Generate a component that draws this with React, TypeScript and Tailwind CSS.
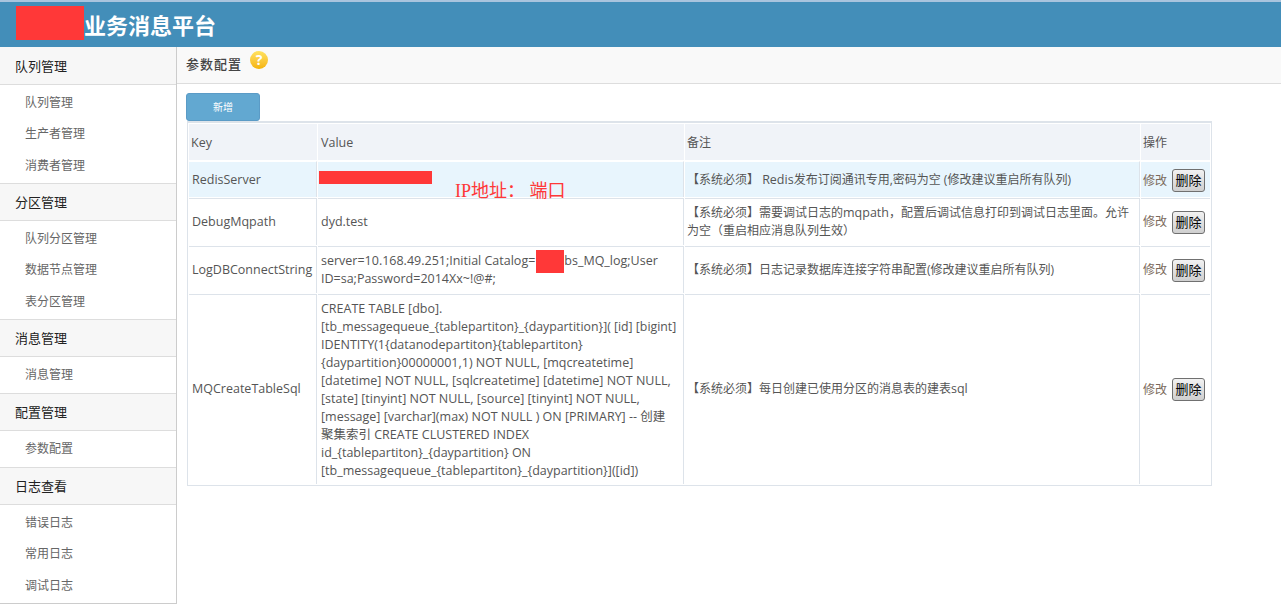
const ff = { fontFamily: '"Open Sans", "Noto Sans CJK SC", sans-serif' }

const menu = [
  { title: '队列管理', items: ['队列管理', '生产者管理', '消费者管理'] },
  { title: '分区管理', items: ['队列分区管理', '数据节点管理', '表分区管理'] },
  { title: '消息管理', items: ['消息管理'] },
  { title: '配置管理', items: ['参数配置'] },
  { title: '日志查看', items: ['错误日志', '常用日志', '调试日志'] },
]

const sqlLines = [
  'CREATE TABLE [dbo].',
  '[tb_messagequeue_{tablepartiton}_{daypartition}]( [id] [bigint]',
  'IDENTITY(1{datanodepartiton}{tablepartiton}',
  '{daypartition}00000001,1) NOT NULL, [mqcreatetime]',
  '[datetime] NOT NULL, [sqlcreatetime] [datetime] NOT NULL,',
  '[state] [tinyint] NOT NULL, [source] [tinyint] NOT NULL,',
  '[message] [varchar](max) NOT NULL ) ON [PRIMARY] -- 创建',
  '聚集索引 CREATE CLUSTERED INDEX',
  'id_{tablepartiton}_{daypartition} ON',
  '[tb_messagequeue_{tablepartiton}_{daypartition}]([id])',
]

function Redact({ className }: { className: string }) {
  return <span className={`inline-block bg-[#ff3838] ${className}`} />
}

function L({ children }: { children: string }) {
  return <span className="text-[12.5px]">{children}</span>
}

function Actions() {
  return (
    <div className="flex items-center gap-[5px]">
      <span className="text-[#7b6a5c]">修改</span>
      <button className="h-[23px] w-[33px] rounded-[3px] border border-[#707070] bg-gradient-to-b from-[#f2f2f2] to-[#cfcfcf] text-[13px] leading-none text-black">删除</button>
    </div>
  )
}

const cell = 'border-t border-r border-[#dde3ea] pl-[3px] pr-0 align-middle'
const first = 'border-t border-r border-[#dde3ea] border-t-white bg-[#e8f5fd] pt-[2px] pl-[3px] pr-0 align-middle'
const wide = 'border-t border-r border-[#dde3ea] pl-[2px] pr-0 align-middle'
const firstWide = 'border-t border-r border-[#dde3ea] border-t-white bg-[#e8f5fd] pt-[2px] pl-[2px] pr-0 align-middle'
const opCell = 'border-t border-[#dde3ea] pl-[2px] pr-0 align-middle'
const latin = 'text-[12.5px]'

export default function App() {
  return (
    <div style={ff} className="h-[607px] w-[1281px] overflow-hidden bg-white text-[12px] text-[#555]">
      <header className="flex h-[47px] items-start border-t-2 border-[#a9c4de] bg-[#438eb9] pl-[16px]">
        <Redact className="mt-[4px] h-[34px] w-[68px]" />
        <span className="mt-[7px] text-[22px] leading-[32px] font-bold text-white">业务消息平台</span>
      </header>
      <div className="flex">
        <aside className="w-[177px] shrink-0 border-r border-b border-[#ccc]">
          {menu.map((group, i) => (
            <div key={group.title}>
              <div className={`flex h-[38px] items-center border-b border-[#ddd] bg-[#f7f7f7] pt-[2px] pl-[15px] text-[13px] text-[#222] ${i > 0 ? 'border-t' : ''}`}>{group.title}</div>
              <div className="pt-[2px] pb-[1.5px]">
                {group.items.map(item => (
                  <div key={item} className={`flex items-center pl-[25px] text-[#666] ${group.items.length === 1 ? 'h-[32.5px]' : 'h-[31.5px]'}`}>{item}</div>
                ))}
              </div>
            </div>
          ))}
        </aside>
        <main className="min-w-0 flex-1">
          <div className="flex h-[37px] items-start border-b border-[#ddd] bg-[#f9f9f9] pl-[9px]">
            <span className="mt-[8px] text-[13px] font-medium tracking-[1px] text-[#444]">参数配置</span>
            <span className="mt-[4px] ml-[8px] flex h-[18px] w-[18px] items-center justify-center rounded-full bg-gradient-to-b from-[#ffe25e] to-[#f5b400] text-[14px] font-bold leading-none text-white">?</span>
          </div>
          <div className="pl-[9px] pt-[9px]">
            <button className="block h-[28px] w-[74px] rounded-[3px] border border-[#5b9bc6] bg-[#62a8d1] text-[10px] text-white">新增</button>
            <table className="ml-[1px] w-[1025px] table-fixed border-separate border-spacing-[1px] border border-t-2 border-[#dde3ea] bg-white">
              <colgroup>
                <col className="w-[128px]" />
                <col className="w-[366px]" />
                <col className="w-[455px]" />
                <col />
              </colgroup>
              <tbody>
                <tr className="h-[36px] bg-[#f0f3f8]">
                  <td className={`px-[2px] pt-[2px] ${latin}`}>Key</td>
                  <td className={`px-[3px] pt-[2px] ${latin}`}>Value</td>
                  <td className="px-[2px] pt-[2px]">备注</td>
                  <td className="px-[2px] pt-[2px]">操作</td>
                </tr>
                <tr className="h-[36px]">
                  <td className={`${first} ${latin}`}>RedisServer</td>
                  <td className={first}>
                    <div className="relative h-[24px]">
                      <Redact className="absolute top-[2px] left-[-2px] h-[13px] w-[113px]" />
                      <span style={{ fontFamily: '"Liberation Serif", "Noto Sans CJK SC", serif' }} className="absolute top-[9px] left-[134px] text-[18px] leading-[26px] whitespace-nowrap text-[#ff3838]">IP地址： 端口</span>
                    </div>
                  </td>
                  <td className={firstWide}>【系统必须】 <L>Redis</L>发布订阅通讯专用,密码为空 (修改建议重启所有队列)</td>
                  <td className={`${firstWide} border-r-0`}><Actions /></td>
                </tr>
                <tr className="h-[47px]">
                  <td className={`${cell} ${latin}`}>DebugMqpath</td>
                  <td className={`${cell} ${latin}`}>dyd.test</td>
                  <td className={`${wide} leading-[18px]`}>【系统必须】需要调试日志的<L>mqpath</L>，配置后调试信息打印到调试日志里面。允许为空（重启相应消息队列生效）</td>
                  <td className={opCell}><Actions /></td>
                </tr>
                <tr className="h-[47px]">
                  <td className={`${cell} ${latin}`}>LogDBConnectString</td>
                  <td className={`${cell} ${latin} leading-[18px]`}>server=10.168.49.251;Initial Catalog=<Redact className="-my-[3px] ml-[1px] h-[23px] w-[28px] align-middle" />bs_MQ_log;User ID=sa;Password=2014Xx~!@#;</td>
                  <td className={wide}>【系统必须】日志记录数据库连接字符串配置(修改建议重启所有队列)</td>
                  <td className={opCell}><Actions /></td>
                </tr>
                <tr className="h-[190px]">
                  <td className={`${cell} ${latin}`}>MQCreateTableSql</td>
                  <td className={`${cell} ${latin} leading-[18px] whitespace-nowrap`}>
                    {sqlLines.map((line, i) => (
                      <div key={i} className={i === 1 ? 'text-[12.3px]' : ''}>{line}</div>
                    ))}
                  </td>
                  <td className={wide}>【系统必须】每日创建已使用分区的消息表的建表<L>sql</L></td>
                  <td className={opCell}><Actions /></td>
                </tr>
              </tbody>
            </table>
          </div>
        </main>
      </div>
    </div>
  )
}
